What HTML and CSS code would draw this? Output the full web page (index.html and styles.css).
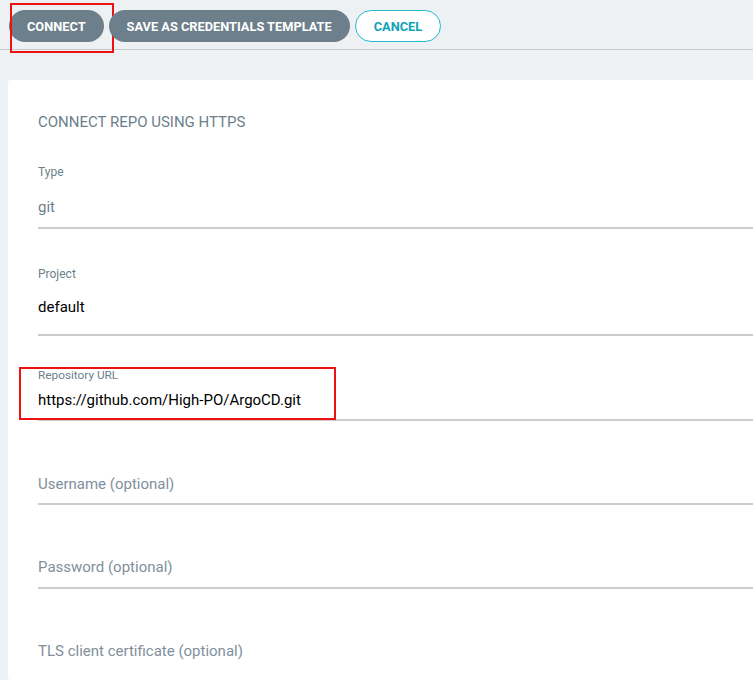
FILE: index.html
```html
<!DOCTYPE html>
<html lang="en">
<head>
  <meta charset="UTF-8">
  <meta name="viewport" content="width=device-width, initial-scale=1.0">
  <title>Connect repository</title>
  <link rel="stylesheet" href="styles.css">
</head>
<body>

  <div class="toolbar">
    <button class="btn btn--solid btn--marked">CONNECT</button>
    <button class="btn btn--solid">SAVE AS CREDENTIALS TEMPLATE</button>
    <button class="btn btn--outline">CANCEL</button>
  </div>

  <div class="card">
    <h2 class="card-title">CONNECT REPO USING HTTPS</h2>

    <div class="field field--type">
      <label class="field-label">Type</label>
      <div class="field-value field-value--muted">git</div>
    </div>

    <div class="field field--project">
      <label class="field-label">Project</label>
      <div class="field-value">default</div>
    </div>

    <div class="field field--url field--marked">
      <label class="field-label field-label--small">Repository URL</label>
      <div class="field-value">https://github.com/High-PO/ArgoCD.git</div>
    </div>

    <div class="field field--empty">
      <div class="field-value field-value--placeholder">Username (optional)</div>
    </div>

    <div class="field field--empty">
      <div class="field-value field-value--placeholder">Password (optional)</div>
    </div>

    <div class="field field--empty field--last">
      <div class="field-value field-value--placeholder">TLS client certificate (optional)</div>
    </div>
  </div>

</body>
</html>
```

FILE: styles.css
```css
/* Reset */
* {
  margin: 0;
  padding: 0;
  box-sizing: border-box;
}

body {
  font-family: Roboto, 'Liberation Sans', sans-serif;
  background-color: #eef1f4;
  color: #000;
  overflow: hidden;
  height: 680px;
}

/* Top toolbar */
.toolbar {
  display: flex;
  gap: 5px;
  height: 50px;
  padding: 10px 9px 0;
  border-bottom: 1px solid #c9ccd0;
}

.btn {
  position: relative;
  height: 32px;
  border-radius: 16px;
  padding: 0 18px;
  font-family: inherit;
  font-size: 12.8px;
  font-weight: 700;
  letter-spacing: 0;
  cursor: pointer;
}

.btn--solid {
  background-color: #6d7f8b;
  color: #fff;
  border: none;
}

.btn--outline {
  background-color: #fff;
  color: #10a3b5;
  border: 1px solid #21bccd;
}

/* Red annotation boxes */
.btn--marked::after {
  content: '';
  position: absolute;
  left: 1px;
  top: -7px;
  width: 100px;
  height: 46px;
  border: 2px solid #ee1111;
}

/* Card */
.card {
  margin: 30px 0 0 8px;
  background-color: #fff;
  border-radius: 3px 0 0 3px;
  padding: 32px 0 0 30px;
  height: 600px;
  overflow: hidden;
}

.card-title {
  font-size: 15px;
  line-height: 20px;
  font-weight: 400;
  color: #6d7f8b;
}

/* Form fields */
.field {
  position: relative;
  border-bottom: 2px solid #cccccc;
}

.field-label {
  display: block;
  font-size: 12px;
  line-height: 14px;
  color: #6d7f8b;
}

.field-label--small {
  font-size: 11.8px;
  line-height: 13px;
}

.field-value {
  font-size: 15px;
  line-height: 20px;
}

.field-value--muted {
  color: #6d7f8b;
}

.field-value--placeholder {
  color: #7f909c;
}

.field--type {
  margin-top: 33px;
}
.field--type .field-value {
  margin-top: 18px;
  padding-bottom: 10px;
}

.field--project {
  margin-top: 38px;
}
.field--project .field-value {
  margin-top: 16px;
  padding-bottom: 17px;
}

.field--url {
  margin-top: 33px;
}
.field--url .field-value {
  margin-top: 8px;
  padding-bottom: 9px;
}

.field--empty {
  margin-top: 53px;
}
.field--empty .field-value {
  padding-bottom: 9px;
}
.field--empty + .field--empty {
  margin-top: 52px;
}
.field--empty + .field--empty .field-value {
  padding-bottom: 10px;
}
.field--empty.field--last .field-value {
  padding-bottom: 30px;
}

.field--marked::after {
  content: '';
  position: absolute;
  left: -19px;
  top: -2px;
  width: 313px;
  height: 49px;
  border: 2px solid #ee1111;
}
```
